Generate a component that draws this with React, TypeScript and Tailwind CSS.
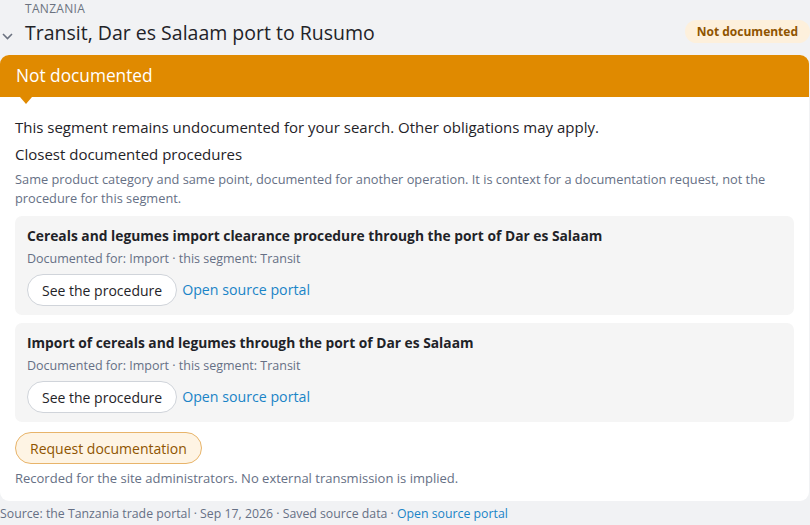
import React from "react";

function Procedure({ title }: { title: string }) {
  return (
    <div className="rounded-[7px] bg-[#f5f5f5] px-3 pt-[9px] pb-[9px]">
      <div className="text-[13.8px] font-bold leading-[22px] text-[#1f2328]">{title}</div>
      <div className="mt-[2px] text-[12.5px] leading-[20px] text-[#667085]">
        Documented for: Import · this segment: Transit
      </div>
      <div className="mt-[5px] flex items-center gap-[5px]">
        <button className="h-[32px] rounded-full border border-[#d0d4da] bg-white px-[14px] text-[14px] text-[#1f2328]">
          See the procedure
        </button>
        <a className="text-[14.2px] text-[#1a84c7]">Open source portal</a>
      </div>
    </div>
  );
}

export default function App() {
  return (
    <div
      className="h-[525px] w-[810px] overflow-hidden bg-[#f1f2f4]"
      style={{ fontFamily: '"Open Sans", "Noto Sans", sans-serif' }}
    >
      <div className="pl-[25px] pt-[1px] text-[12px] leading-[16px] tracking-[0.3px] text-[#6b7280]">
        TANZANIA
      </div>
      <div className="flex h-[31px] items-center justify-between">
        <div className="flex items-center">
          <svg width="25" height="28" viewBox="0 0 25 28" className="shrink-0">
            <path d="M3 15 L7.5 19.5 L12 15" fill="none" stroke="#6b7280" strokeWidth="1.6" />
          </svg>
          <div className="text-[19.5px] leading-[30px] text-[#1f2328]">
            Transit, Dar es Salaam port to Rusumo
          </div>
        </div>
        <span className="mb-[3px] rounded-full bg-[#fdf0dc] px-[12px] py-[2px] text-[12px] font-bold leading-[19px] text-[#8f5400]">
          Not documented
        </span>
      </div>
      <div className="mt-[7px] mr-[1px] flex flex-col rounded-[9px] bg-white">
        <div className="relative flex h-[42px] items-center rounded-t-[9px] bg-[#e08a00] px-[16px] text-[17.3px] text-white">
          Not documented
          <span className="absolute left-[20px] top-[42px] h-0 w-0 border-l-[6px] border-r-[6px] border-t-[7px] border-l-transparent border-r-transparent border-t-[#e08a00]" />
        </div>
        <div className="flex flex-col px-[15px] pt-[19px] pb-[13px]">
          <div className="text-[15px] leading-[22px] text-[#1f2328]">
            This segment remains undocumented for your search. Other obligations may apply.
          </div>
          <div className="mt-[5px] text-[15px] leading-[22px] text-[#1f2328]">
            Closest documented procedures
          </div>
          <div className="mt-[5px] text-[12.8px] leading-[18.5px] text-[#667085]">
            Same product category and same point, documented for another operation. It is context for a documentation request, not the procedure for this segment.
          </div>
          <div className="mt-[9px] flex flex-col gap-[8px]">
            <Procedure title="Cereals and legumes import clearance procedure through the port of Dar es Salaam" />
            <Procedure title="Import of cereals and legumes through the port of Dar es Salaam" />
          </div>
          <button className="mt-[10px] h-[32px] self-start rounded-full border border-[#e8b46a] bg-[#fef4e4] px-[14px] text-[14px] text-[#8f5400]">
            Request documentation
          </button>
          <div className="mt-[4px] text-[13px] leading-[20px] text-[#667085]">
            Recorded for the site administrators. No external transmission is implied.
          </div>
        </div>
      </div>
      <div className="mt-[4px] text-[12.3px] leading-[18px] text-[#667085]">
        Source: the Tanzania trade portal · Sep 17, 2026 · Saved source data ·{" "}
        <a className="text-[#1a84c7]">Open source portal</a>
      </div>
    </div>
  );
}
